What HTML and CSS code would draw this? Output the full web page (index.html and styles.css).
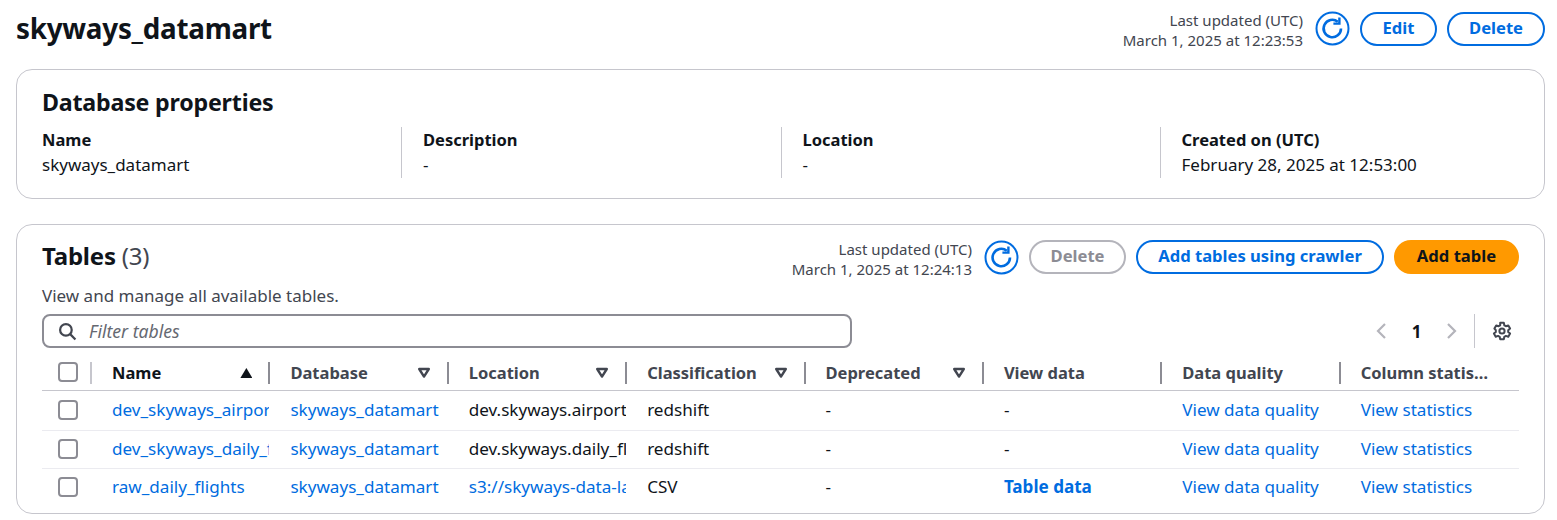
FILE: index.html
```html
<!DOCTYPE html>
<html lang="en">
<head>
    <meta charset="UTF-8">
    <title>skyways_datamart</title>
    <link rel="stylesheet" href="styles.css">
</head>
<body>
    <svg class="icon-defs" width="0" height="0">
        <symbol id="refresh" viewBox="0 0 35 35">
            <circle cx="17.5" cy="17.5" r="16" fill="none" stroke="currentColor" stroke-width="2"/>
            <path d="M26 17.5a8.7 8.7 0 1 1-3.2-6.7" fill="none" stroke="currentColor" stroke-width="2.6"/>
            <path d="M24.4 6.6v6h-6" fill="none" stroke="currentColor" stroke-width="2.4"/>
        </symbol>
        <symbol id="caret" viewBox="0 0 14 12">
            <path d="M2.2 2h9.6L7 9.6z" fill="none" stroke="currentColor" stroke-width="2.4" stroke-linejoin="round"/>
        </symbol>
    </svg>

    <!-- Page header -->
    <header class="page-header">
        <h1>skyways_datamart</h1>
        <div class="actions">
            <div class="updated">Last updated (UTC)<br>March 1, 2025 at 12:23:53</div>
            <button class="refresh"><svg width="35" height="35"><use href="#refresh"/></svg></button>
            <button class="btn edit-btn">Edit</button>
            <button class="btn delete-btn">Delete</button>
        </div>
    </header>

    <!-- Database properties -->
    <section class="card props">
        <h2>Database properties</h2>
        <div class="props-grid">
            <div class="prop"><div class="prop-label">Name</div><div>skyways_datamart</div></div>
            <div class="prop"><div class="prop-label">Description</div><div>-</div></div>
            <div class="prop"><div class="prop-label">Location</div><div>-</div></div>
            <div class="prop"><div class="prop-label">Created on (UTC)</div><div>February 28, 2025 at 12:53:00</div></div>
        </div>
    </section>

    <!-- Tables -->
    <section class="card tables">
        <div class="tables-head">
            <h2>Tables <span class="count">(3)</span></h2>
            <div class="actions">
                <div class="updated">Last updated (UTC)<br>March 1, 2025 at 12:24:13</div>
                <button class="refresh"><svg width="35" height="35"><use href="#refresh"/></svg></button>
                <button class="btn disabled">Delete</button>
                <button class="btn crawler-btn">Add tables using crawler</button>
                <button class="btn primary">Add table</button>
            </div>
        </div>
        <p class="tables-desc">View and manage all available tables.</p>

        <div class="tools">
            <div class="filter">
                <svg width="19" height="19" viewBox="0 0 18 18" fill="none" stroke="#424650" stroke-width="2.1"><circle cx="7.5" cy="7.5" r="5.5"/><path d="M11.5 11.5l5 5"/></svg>
                <span>Filter tables</span>
            </div>
            <div class="pager">
                <svg width="12" height="18" viewBox="0 0 12 18" fill="none" stroke="#b4b4bb" stroke-width="2.2"><path d="M10 2L3 9l7 7"/></svg>
                <span class="page-num">1</span>
                <svg width="12" height="18" viewBox="0 0 12 18" fill="none" stroke="#b4b4bb" stroke-width="2.2"><path d="M2 2l7 7-7 7"/></svg>
                <div class="pager-sep"></div>
                <svg width="20" height="20" viewBox="0 0 20 20" fill="none" stroke="#424650" stroke-width="2"><circle cx="10" cy="10" r="2.6"/><path d="M8.2 1.8h3.6l.5 2.5 1.6.9 2.4-.8 1.8 3.1-1.9 1.7v1.7l1.9 1.7-1.8 3.1-2.4-.8-1.6.9-.5 2.5H8.2l-.5-2.5-1.6-.9-2.4.8-1.8-3.1 1.9-1.7V9.2L2.4 7.5l1.8-3.1 2.4.8 1.6-.9z" stroke-linejoin="round"/></svg>
            </div>
        </div>

        <div class="table">
            <div class="row head">
                <div class="cell check"><span class="box"></span></div>
                <div class="cell sort dark">Name<span class="tri up"></span></div>
                <div class="cell sort">Database<svg class="caret"><use href="#caret"/></svg></div>
                <div class="cell sort">Location<svg class="caret"><use href="#caret"/></svg></div>
                <div class="cell sort">Classification<svg class="caret"><use href="#caret"/></svg></div>
                <div class="cell sort">Deprecated<svg class="caret"><use href="#caret"/></svg></div>
                <div class="cell">View data</div>
                <div class="cell">Data quality</div>
                <div class="cell nosep"><span class="clip-dots">Column statistics</span></div>
            </div>
            <div class="row first">
                <div class="cell check"><span class="box"></span></div>
                <div class="cell"><a>dev_skyways_airports</a></div>
                <div class="cell"><a>skyways_datamart</a></div>
                <div class="cell">dev.skyways.airports</div>
                <div class="cell">redshift</div>
                <div class="cell">-</div>
                <div class="cell">-</div>
                <div class="cell"><a>View data quality</a></div>
                <div class="cell"><a>View statistics</a></div>
            </div>
            <div class="row">
                <div class="cell check"><span class="box"></span></div>
                <div class="cell"><a>dev_skyways_daily_flights</a></div>
                <div class="cell"><a>skyways_datamart</a></div>
                <div class="cell">dev.skyways.daily_flights</div>
                <div class="cell">redshift</div>
                <div class="cell">-</div>
                <div class="cell">-</div>
                <div class="cell"><a>View data quality</a></div>
                <div class="cell"><a>View statistics</a></div>
            </div>
            <div class="row last">
                <div class="cell check"><span class="box"></span></div>
                <div class="cell"><a>raw_daily_flights</a></div>
                <div class="cell"><a>skyways_datamart</a></div>
                <div class="cell"><a>s3://skyways-data-lake/raw</a></div>
                <div class="cell">CSV</div>
                <div class="cell">-</div>
                <div class="cell"><a class="bold">Table data</a></div>
                <div class="cell"><a>View data quality</a></div>
                <div class="cell"><a>View statistics</a></div>
            </div>
        </div>
    </section>
</body>
</html>
```

FILE: styles.css
```css
body {
    margin: 0;
    padding: 0 12px 0 16px;
    background-color: #fff;
    color: #0f141a;
    font-family: "Noto Sans", Arial, sans-serif;
    font-size: 17px;
    overflow: hidden;
}

.icon-defs {
    position: absolute;
}

h1, h2, p {
    margin: 0;
}

/* Page header */
.page-header {
    display: flex;
    justify-content: space-between;
    align-items: center;
    height: 57px;
}

h1 {
    margin-top: -2px;
    font-size: 27.8px;
    font-weight: 700;
    letter-spacing: -0.25px;
}

.actions {
    display: flex;
    align-items: center;
    gap: 10px;
}

.updated {
    margin-top: 2px;
    margin-right: 2px;
    text-align: right;
    font-size: 15px;
    line-height: 20px;
    color: #424650;
}

.tables-head .updated {
    margin-top: 4px;
}

.refresh {
    width: 35px;
    height: 35px;
    padding: 0;
    border: none;
    background: none;
    color: #006ce0;
}

.refresh svg {
    display: block;
}

.btn {
    box-sizing: border-box;
    height: 34px;
    padding: 0 0 2px;
    border: 2px solid #006ce0;
    border-radius: 17px;
    background: #fff;
    color: #006ce0;
    font-family: inherit;
    font-size: 16.6px;
    font-weight: 700;
    white-space: nowrap;
}

.tables-head .btn {
    padding-bottom: 3px;
}

.edit-btn {
    width: 77px;
}

.delete-btn {
    width: 98px;
}

.crawler-btn {
    width: 248px;
}

.btn.disabled {
    width: 97px;
    border-color: #b4b4bb;
    color: #8c8c94;
}

.btn.primary {
    width: 125px;
    border-color: #ff9900;
    background: #ff9900;
    color: #0f141a;
}

/* Cards */
.card {
    border: 1px solid #c6c6cd;
    border-radius: 16px;
    background: #fff;
    box-sizing: border-box;
}

.props {
    height: 130px;
    margin-top: 12px;
    padding: 17px 25px 0;
}

h2 {
    font-size: 23.2px;
    font-weight: 700;
    line-height: 30px;
    letter-spacing: -0.2px;
}

.count {
    font-weight: 400;
    color: #424650;
}

.props-grid {
    display: grid;
    grid-template-columns: 359px 379.5px 379px 1fr;
    margin-top: 10px;
    line-height: 25px;
}

.prop {
    height: 51px;
    padding-left: 21px;
    border-left: 1px solid #c6c6cd;
}

.prop:first-child {
    padding-left: 0;
    border-left: none;
}

.prop-label {
    font-size: 16.5px;
    font-weight: 700;
}

.tables {
    height: 290px;
    margin-top: 25px;
    padding: 15px 25px 0;
}

.tables-head {
    display: flex;
    justify-content: space-between;
    align-items: center;
    height: 34px;
}

.tables-head h2 {
    margin-top: -2px;
    font-size: 24px;
}

.tables-desc {
    margin-top: 12px;
    font-size: 17px;
    line-height: 20px;
    color: #424650;
}

/* Filter and pager */
.tools {
    display: flex;
    justify-content: space-between;
    align-items: center;
    margin-top: 8px;
}

.filter {
    display: flex;
    align-items: center;
    gap: 12px;
    box-sizing: border-box;
    width: 810px;
    height: 34px;
    padding-left: 14px;
    border: 2px solid #8c8c94;
    border-radius: 8px;
    color: #656871;
    font-size: 17.6px;
    font-style: italic;
}

.pager {
    display: flex;
    align-items: center;
    color: #0f141a;
    font-weight: 700;
    padding-right: 7px;
}

.page-num {
    width: 59px;
    text-align: center;
}

.pager-sep {
    width: 1px;
    height: 34px;
    margin: 0 17px 0 16px;
    background: #c6c6cd;
}

/* Table */
.table {
    margin-top: 8px;
}

.row {
    display: grid;
    grid-template-columns: 50px repeat(8, 1fr);
    align-items: center;
    box-sizing: border-box;
    height: 38px;
    padding-bottom: 2px;
    border-bottom: 1px solid #ebebf0;
    font-size: 17.1px;
}

.row.first {
    height: 40px;
}

.row.head {
    height: 35px;
    padding-bottom: 0;
    border-bottom: 1px solid #c6c6cd;
    font-size: 16.5px;
    font-weight: 700;
    color: #424650;
}

.row.last {
    padding-bottom: 3px;
    border-bottom: none;
}

.cell {
    min-width: 0;
    margin-right: 1px;
    padding-left: 20px;
    white-space: nowrap;
    overflow: hidden;
}

.cell.check {
    padding-left: 16px;
}

.box {
    display: block;
    box-sizing: border-box;
    width: 20px;
    height: 20px;
    margin-top: 1px;
    border: 2px solid #8c8c94;
    border-radius: 4px;
}

.head .box {
    margin-top: 0;
}

.head .cell {
    position: relative;
    margin-right: 0;
    height: 22px;
    line-height: 22px;
}

.head .cell::after {
    content: "";
    position: absolute;
    right: 0;
    top: 0;
    width: 2px;
    height: 22px;
    background: #8c8c94;
}

.head .nosep::after {
    display: none;
}

.head .check::after {
    background: #c6c6cd;
}

.head .dark {
    color: #0f141a;
}

.caret {
    position: absolute;
    right: 18px;
    top: 5px;
    width: 14px;
    height: 12px;
    color: #424650;
}

.tri {
    position: absolute;
    right: 18px;
    top: 6px;
    width: 12px;
    height: 10px;
    background: #0f141a;
    clip-path: polygon(50% 0, 100% 100%, 0 100%);
}

.clip-dots {
    display: block;
    margin-right: 26px;
    overflow: hidden;
    text-overflow: ellipsis;
}

a {
    color: #006ce0;
}

a.bold {
    font-weight: 700;
}
```
